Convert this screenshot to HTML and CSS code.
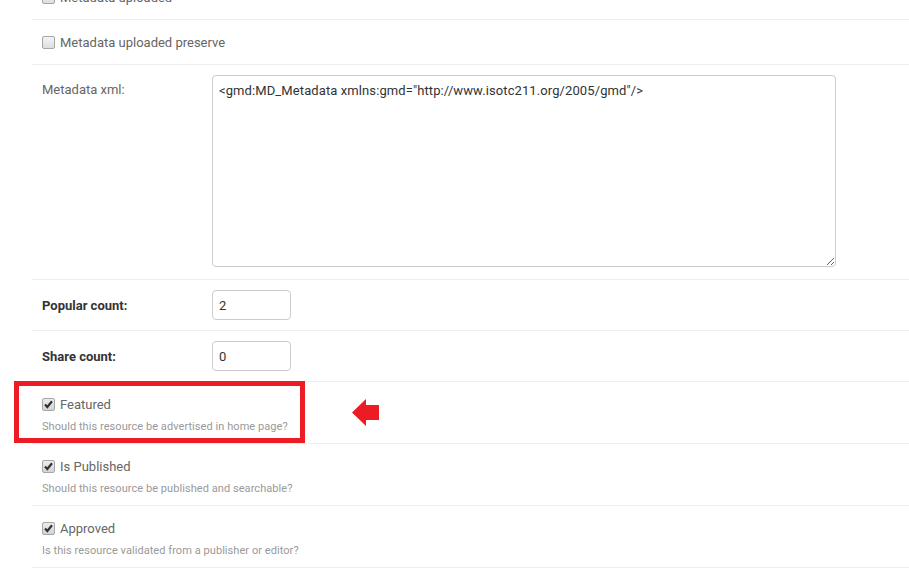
FILE: index.html
```html
<!DOCTYPE html>
<html>
<head>
<meta charset="utf-8">
<link rel="stylesheet" href="styles.css">
</head>
<body>
<div class="form">
  <div class="row">
    <label class="cb"><input type="checkbox"><span>Metadata uploaded</span></label>
  </div>
  <div class="row">
    <label class="cb"><input type="checkbox"><span>Metadata uploaded preserve</span></label>
  </div>
  <div class="row field">
    <label class="lbl">Metadata xml:</label>
    <textarea class="xml">&lt;gmd:MD_Metadata xmlns:gmd="http://www.isotc211.org/2005/gmd"/&gt;</textarea>
  </div>
  <div class="row field">
    <label class="lbl req">Popular count:</label>
    <input class="num" type="text" value="2">
  </div>
  <div class="row field">
    <label class="lbl req">Share count:</label>
    <input class="num" type="text" value="0">
  </div>
  <div class="row">
    <label class="cb"><input type="checkbox" checked><span>Featured</span></label>
    <p class="help">Should this resource be advertised in home page?</p>
  </div>
  <div class="row">
    <label class="cb"><input type="checkbox" checked><span>Is Published</span></label>
    <p class="help">Should this resource be published and searchable?</p>
  </div>
  <div class="row">
    <label class="cb"><input type="checkbox" checked><span>Approved</span></label>
    <p class="help">Is this resource validated from a publisher or editor?</p>
  </div>
</div>
<div class="highlight"></div>
<svg class="arrow" width="28" height="28" viewBox="0 0 28 28">
  <polygon points="0,13.5 14,0 14,6 27,6 27,21 14,21 14,27" fill="#ed1c24"/>
</svg>
</body>
</html>
```

FILE: styles.css
```css
html, body {
  margin: 0;
  padding: 0;
  background: #fff;
  overflow: hidden;
}
body {
  font-family: Roboto, "Liberation Sans", sans-serif;
  font-size: 13px;
  color: #333;
  position: relative;
  height: 572px;
}
.form {
  margin-top: -25px;
  margin-left: 32px;
}
.row {
  padding: 10px;
  border-bottom: 1px solid #eee;
}
.field {
  display: flex;
  align-items: flex-start;
}
.cb {
  display: flex;
  align-items: center;
  height: 24px;
  color: #666;
  font-size: 13px;
}
.cb input {
  -webkit-appearance: none;
  appearance: none;
  width: 13px;
  height: 13px;
  margin: 0 5px 0 0;
  border: 1px solid #a6a6a6;
  border-radius: 2px;
  background: linear-gradient(#f4f4f4, #dedede);
  flex: none;
}
.cb input:checked {
  background-image: url("data:image/svg+xml,%3Csvg xmlns='http://www.w3.org/2000/svg' width='11' height='11' viewBox='0 0 11 11'%3E%3Cpath d='M2 5.5 L4.3 8 L9 2.3' fill='none' stroke='%23333' stroke-width='2.2'/%3E%3C/svg%3E"), linear-gradient(#ececec, #d4d4d4);
  background-repeat: no-repeat;
  background-position: center;
}
.help {
  margin: 0;
  padding-top: 4px;
  font-size: 11px;
  line-height: 13px;
  letter-spacing: 0.06px;
  color: #999;
}
.lbl {
  width: 160px;
  padding: 7px 10px 0 0;
  line-height: 16px;
  color: #666;
  flex: none;
}
.lbl.req {
  padding-top: 8px;
  font-weight: bold;
  color: #333;
}
.xml {
  box-sizing: border-box;
  width: 624px;
  height: 192px;
  margin: 0 0 2px 0;
  padding: 6px 6px 5px;
  border: 1px solid #ccc;
  border-radius: 4px;
  font-family: Roboto, "Liberation Sans", sans-serif;
  font-size: 13px;
  line-height: 18px;
  letter-spacing: 0.1px;
  color: #333;
  resize: both;
  outline: none;
}
.num {
  box-sizing: border-box;
  width: 79px;
  height: 30px;
  margin: 0;
  padding: 5px 6px;
  border: 1px solid #ccc;
  border-radius: 4px;
  font-family: Roboto, "Liberation Sans", sans-serif;
  font-size: 13px;
  color: #333;
  outline: none;
}
.highlight {
  position: absolute;
  left: 14px;
  top: 381px;
  width: 281px;
  height: 52px;
  border: 5px solid #ed1c24;
}
.arrow {
  position: absolute;
  left: 352px;
  top: 399px;
}
```
